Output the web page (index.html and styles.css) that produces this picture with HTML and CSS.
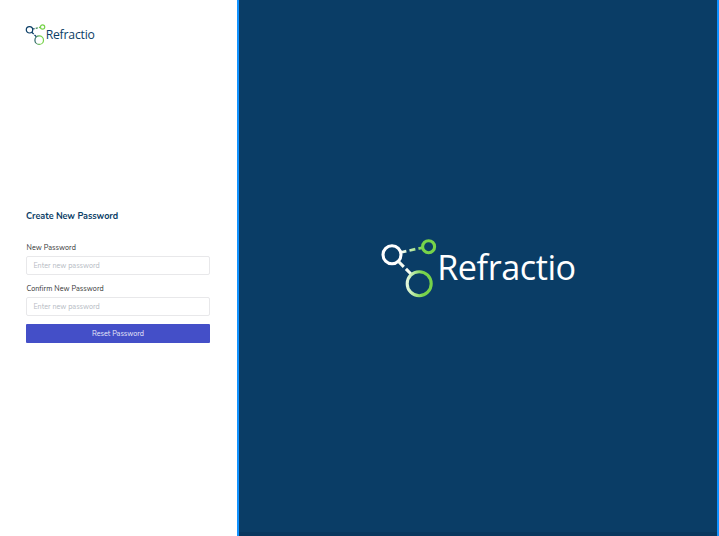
FILE: index.html
```html
<!DOCTYPE html>
<html lang="en">
<head>
<meta charset="utf-8">
<title>Refractio</title>
<link rel="stylesheet" href="styles.css">
</head>
<body>
<main class="page">
  <section class="panel">
    <svg class="logo logo-small" viewBox="-1.6 -1.5 196 60" role="img" aria-label="Refractio">
      <defs>
        <linearGradient id="ring-dark"><stop offset="0" stop-color="#2c6269"/><stop offset=".65" stop-color="#77d34a"/></linearGradient>
        <linearGradient id="dash-dark" gradientUnits="userSpaceOnUse" x1="20" y1="0" x2="42" y2="0"><stop offset="0" stop-color="#0a3d66"/><stop offset="1" stop-color="#77d34a"/></linearGradient>
      </defs>
      <g fill="none" stroke-width="3.4">
        <circle cx="11" cy="16.7" r="9" stroke="#0a3d66"/>
        <path d="M19.5 14.5L42 9.5" stroke="url(#dash-dark)" stroke-dasharray="6 3.2"/>
        <path d="M17.5 23.5L30.5 36.5" stroke="#0a3d66" stroke-dasharray="7.5 3"/>
        <circle cx="47.6" cy="8.7" r="6" stroke="#77d34a"/>
        <circle cx="38.2" cy="45.7" r="12" stroke="url(#ring-dark)"/>
      </g>
      <text class="word" x="56.2" y="41.5" textLength="138" fill="#0a3d66">Refractio</text>
    </svg>
    <form class="form">
      <h1 class="title">Create New Password</h1>
      <label class="label" for="password"><span>New Password</span></label>
      <input class="input" id="password" type="password" placeholder="Enter new password">
      <label class="label" for="confirm"><span>Confirm New Password</span></label>
      <input class="input" id="confirm" type="password" placeholder="Enter new password">
      <button class="button" type="button">Reset Password</button>
    </form>
  </section>
  <section class="hero">
    <svg class="logo logo-large" viewBox="0 0 196 60" role="img" aria-label="Refractio">
      <defs>
        <linearGradient id="ring-light"><stop offset="0" stop-color="#e2f6da"/><stop offset=".65" stop-color="#77d34a"/></linearGradient>
        <linearGradient id="dash-light" gradientUnits="userSpaceOnUse" x1="20" y1="0" x2="42" y2="0"><stop offset="0" stop-color="#fff"/><stop offset="1" stop-color="#77d34a"/></linearGradient>
      </defs>
      <g fill="none" stroke-width="3.1">
        <circle cx="11" cy="16.7" r="9" stroke="#fff"/>
        <path d="M19.5 14.5L42 9.5" stroke="url(#dash-light)" stroke-width="2.8" stroke-dasharray="6 3.2"/>
        <path d="M17.5 23.5L30.5 36.5" stroke="#f4fbf1" stroke-dasharray="7.5 3"/>
        <circle cx="47.6" cy="8.7" r="6" stroke="#77d34a"/>
        <circle cx="38.2" cy="45.7" r="12" stroke="url(#ring-light)"/>
      </g>
      <text class="word" x="56.2" y="41.5" textLength="139" fill="#fff">Refractio</text>
    </svg>
  </section>
</main>
</body>
</html>
```
FILE: styles.css
```css
* { box-sizing: border-box; }
body { margin: 0; font-family: "Nunito", "Open Sans", sans-serif; background: #fff; }
.page { display: grid; grid-template-columns: 237px 1fr; height: 536px; overflow: hidden; }
.panel { padding: 23px 27px 0 25px; }
.logo { display: block; overflow: visible; }
.logo-small { width: 70px; height: 22px; }
.logo-large { width: 196px; height: 60px; margin-left: 2px; }
.word { font: 34.2px "Open Sans", sans-serif; }
.form { margin: 164px 0 0 1px; display: flex; flex-direction: column; }
.title { margin: 0 0 21px; font-size: 9px; line-height: 14px; font-weight: 700; letter-spacing: -.03px; color: #0a3d66; }
.label { height: 9px; margin-bottom: 3px; padding-left: .5px; font-size: 7.2px; line-height: 9px; letter-spacing: .06px; color: #333; }
.input { width: 184px; height: 19px; margin: 0 0 10px; padding: 0 6.4px; border: 1px solid #e8e8ea; border-radius: 2px; outline: 0; font: 7.2px "Nunito", "Open Sans", sans-serif; background: #fff; }
.input::placeholder { color: #b5bac3; opacity: 1; }
.button { width: 184px; height: 19px; margin-top: -2px; padding: 0; border: 0; border-radius: 1px; background: #444fc8; color: #e8e9fa; font: 7.2px "Nunito", "Open Sans", sans-serif; }
.hero { display: flex; align-items: center; justify-content: center; background: #0a3d66; border: solid #1092ff; border-width: 0 2px; box-shadow: inset 0 -4px 0 #09375e; }
```
